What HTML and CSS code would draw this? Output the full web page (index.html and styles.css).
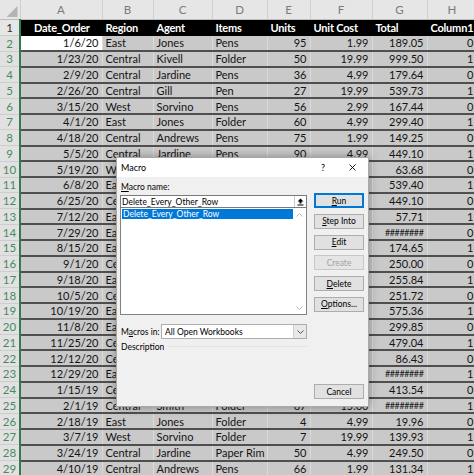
FILE: index.html
```html
<!DOCTYPE html>
<html>
  <head>
    <link rel="stylesheet" href="styles.css">
  </head>
  <body>
    <div class="sheet">
      <table class="grid">
        <colgroup>
          <col class="c-rn"><col class="c-a"><col class="c-b"><col class="c-c"><col class="c-d">
          <col class="c-e"><col class="c-f"><col class="c-g"><col class="c-h">
        </colgroup>
        <thead>
          <tr class="letters">
            <th class="corner"><span class="tri"></span></th>
            <th>A</th><th>B</th><th>C</th><th>D</th><th>E</th><th>F</th><th>G</th><th>H</th>
          </tr>
        </thead>
        <tbody>
          <tr class="head"><th class="rn">1</th><td class="first">Date_Order</td><td>Region</td><td>Agent</td><td>Items</td><td>Units</td><td>Unit Cost</td><td>Total</td><td>Column1</td></tr>
          <tr><th class="rn">2</th><td class="r active">1/6/20</td><td>East</td><td>Jones</td><td>Pens</td><td class="r">95</td><td class="r">1.99</td><td class="r">189.05</td><td class="r">0</td></tr>
          <tr><th class="rn">3</th><td class="r">1/23/20</td><td>Central</td><td>Kivell</td><td>Folder</td><td class="r">50</td><td class="r">19.99</td><td class="r">999.50</td><td class="r">1</td></tr>
          <tr><th class="rn">4</th><td class="r">2/9/20</td><td>Central</td><td>Jardine</td><td>Pens</td><td class="r">36</td><td class="r">4.99</td><td class="r">179.64</td><td class="r">0</td></tr>
          <tr><th class="rn">5</th><td class="r">2/26/20</td><td>Central</td><td>Gill</td><td>Pen</td><td class="r">27</td><td class="r">19.99</td><td class="r">539.73</td><td class="r">1</td></tr>
          <tr><th class="rn">6</th><td class="r">3/15/20</td><td>West</td><td>Sorvino</td><td>Pens</td><td class="r">56</td><td class="r">2.99</td><td class="r">167.44</td><td class="r">0</td></tr>
          <tr><th class="rn">7</th><td class="r">4/1/20</td><td>East</td><td>Jones</td><td>Folder</td><td class="r">60</td><td class="r">4.99</td><td class="r">299.40</td><td class="r">1</td></tr>
          <tr><th class="rn">8</th><td class="r">4/18/20</td><td>Central</td><td>Andrews</td><td>Pens</td><td class="r">75</td><td class="r">1.99</td><td class="r">149.25</td><td class="r">0</td></tr>
          <tr><th class="rn">9</th><td class="r">5/5/20</td><td>Central</td><td>Jardine</td><td>Pens</td><td class="r">90</td><td class="r">4.99</td><td class="r">449.10</td><td class="r">1</td></tr>
          <tr><th class="rn">10</th><td class="r">5/19/20</td><td>West</td><td></td><td></td><td></td><td></td><td class="r">63.68</td><td class="r">0</td></tr>
          <tr><th class="rn">11</th><td class="r">6/8/20</td><td>East</td><td></td><td></td><td></td><td></td><td class="r">539.40</td><td class="r">1</td></tr>
          <tr><th class="rn">12</th><td class="r">6/25/20</td><td>Central</td><td></td><td></td><td></td><td></td><td class="r">449.10</td><td class="r">0</td></tr>
          <tr><th class="rn">13</th><td class="r">7/12/20</td><td>East</td><td></td><td></td><td></td><td></td><td class="r">57.71</td><td class="r">1</td></tr>
          <tr><th class="rn">14</th><td class="r">7/29/20</td><td>East</td><td></td><td></td><td></td><td></td><td class="r hash">########</td><td class="r">0</td></tr>
          <tr><th class="rn">15</th><td class="r">8/15/20</td><td>East</td><td></td><td></td><td></td><td></td><td class="r">174.65</td><td class="r">1</td></tr>
          <tr><th class="rn">16</th><td class="r">9/1/20</td><td>Central</td><td></td><td></td><td></td><td></td><td class="r">250.00</td><td class="r">0</td></tr>
          <tr><th class="rn">17</th><td class="r">9/18/20</td><td>East</td><td></td><td></td><td></td><td></td><td class="r">255.84</td><td class="r">1</td></tr>
          <tr><th class="rn">18</th><td class="r">10/5/20</td><td>Central</td><td></td><td></td><td></td><td></td><td class="r">251.72</td><td class="r">0</td></tr>
          <tr><th class="rn">19</th><td class="r">10/19/20</td><td>East</td><td></td><td></td><td></td><td></td><td class="r">575.36</td><td class="r">1</td></tr>
          <tr><th class="rn">20</th><td class="r">11/8/20</td><td>East</td><td></td><td></td><td></td><td></td><td class="r">299.85</td><td class="r">0</td></tr>
          <tr><th class="rn">21</th><td class="r">11/25/20</td><td>Central</td><td></td><td></td><td></td><td></td><td class="r">479.04</td><td class="r">1</td></tr>
          <tr><th class="rn">22</th><td class="r">12/12/20</td><td>Central</td><td></td><td></td><td></td><td></td><td class="r">86.43</td><td class="r">0</td></tr>
          <tr><th class="rn">23</th><td class="r">12/29/20</td><td>East</td><td></td><td></td><td></td><td></td><td class="r hash">########</td><td class="r">1</td></tr>
          <tr><th class="rn">24</th><td class="r">1/15/19</td><td>Central</td><td></td><td></td><td></td><td></td><td class="r">413.54</td><td class="r">0</td></tr>
          <tr><th class="rn">25</th><td class="r">2/1/19</td><td>Central</td><td>Smith</td><td>Folder</td><td class="r">87</td><td class="r">15.00</td><td class="r hash">########</td><td class="r">1</td></tr>
          <tr><th class="rn">26</th><td class="r">2/18/19</td><td>East</td><td>Jones</td><td>Folder</td><td class="r">4</td><td class="r">4.99</td><td class="r">19.96</td><td class="r">0</td></tr>
          <tr><th class="rn">27</th><td class="r">3/7/19</td><td>West</td><td>Sorvino</td><td>Folder</td><td class="r">7</td><td class="r">19.99</td><td class="r">139.93</td><td class="r">1</td></tr>
          <tr><th class="rn">28</th><td class="r">3/24/19</td><td>Central</td><td>Jardine</td><td>Paper Rim</td><td class="r">50</td><td class="r">4.99</td><td class="r">249.50</td><td class="r">0</td></tr>
          <tr><th class="rn">29</th><td class="r">4/10/19</td><td>Central</td><td>Andrews</td><td>Pens</td><td class="r">66</td><td class="r">1.99</td><td class="r">131.34</td><td class="r">1</td></tr>
        </tbody>
      </table>

      <div class="dialog">
        <div class="titlebar">
          <span class="title">Macro</span>
          <span class="help">?</span>
          <svg class="close" width="7" height="7" viewBox="0 0 7 7">
            <path d="M0.5 0.5L6.5 6.5M6.5 0.5L0.5 6.5" stroke="#000" stroke-width="0.9" fill="none"/>
          </svg>
        </div>
        <div class="dlg-body">
          <div class="left">
            <div class="lbl"><u>M</u>acro name:</div>
            <div class="namebox">
              <span class="name-text">Delete_Every_Other_Row</span>
              <span class="up-btn">
                <svg width="7" height="8" viewBox="0 0 7 8">
                  <path d="M3.5 0.5L6.5 3.5H4.5V5.5H2.5V3.5H0.5Z" fill="#000"/>
                  <rect x="0.5" y="6.5" width="6" height="1" fill="#000"/>
                </svg>
              </span>
            </div>
            <div class="listbox">
              <div class="items">
                <div class="item selected">Delete_Every_Other_Row</div>
              </div>
              <div class="vscroll">
                <svg width="7" height="4" viewBox="0 0 7 4"><path d="M0.5 3.5L3.5 0.5L6.5 3.5" stroke="#b4b4b4" fill="none"/></svg>
                <svg width="7" height="4" viewBox="0 0 7 4"><path d="M0.5 0.5L3.5 3.5L6.5 0.5" stroke="#b4b4b4" fill="none"/></svg>
              </div>
            </div>
            <div class="macros-in">
              <span class="lbl-in">M<u>a</u>cros in:</span>
              <div class="combo">
                <span class="combo-text">All Open Workbooks</span>
                <span class="combo-arrow">
                  <svg width="7" height="4" viewBox="0 0 7 4"><path d="M0.5 0.5L3.5 3.5L6.5 0.5" stroke="#555" fill="none"/></svg>
                </span>
              </div>
            </div>
            <div class="desc">
              <span>Description</span>
              <span class="rule"></span>
            </div>
          </div>
          <div class="buttons">
            <button class="btn default"><u>R</u>un</button>
            <button class="btn"><u>S</u>tep Into</button>
            <button class="btn"><u>E</u>dit</button>
            <button class="btn disabled">Create</button>
            <button class="btn"><u>D</u>elete</button>
            <button class="btn"><u>O</u>ptions...</button>
            <button class="btn cancel">Cancel</button>
          </div>
        </div>
      </div>
    </div>
  </body>
</html>
```

FILE: styles.css
```css
body {
  margin: 0;
  background: #fff;
  font-family: Lato, "Liberation Sans", sans-serif;
  overflow: hidden;
}

.sheet {
  position: relative;
  width: 474px;
  height: 475px;
  overflow: hidden;
}

/* spreadsheet */

.grid {
  border-collapse: collapse;
  table-layout: fixed;
  width: 477px;
  font-size: 11px;
  color: #141414;
}

.c-rn { width: 20px; }
.c-a { width: 82px; }
.c-b { width: 51px; }
.c-c { width: 59px; }
.c-d { width: 55px; }
.c-e { width: 43px; }
.c-f { width: 62px; }
.c-g { width: 55px; }
.c-h { width: 50px; }

.grid td, .grid th {
  padding: 0 3px;
  white-space: nowrap;
  overflow: hidden;
  line-height: 13px;
}

.letters th {
  height: 17px;
  background: #e6e6e6;
  color: #7b7b7b;
  font-size: 11.5px;
  font-weight: normal;
  text-align: center;
  border-right: 1px solid #d0d0d0;
  border-bottom: 1px solid #bdbdbd;
}

.letters th.corner {
  padding: 0 2px 2px 0;
  vertical-align: bottom;
}

.tri {
  display: block;
  width: 11px;
  height: 11px;
  margin-left: auto;
  background: #b4b4b4;
  clip-path: polygon(100% 0, 100% 100%, 0 100%);
}

tbody tr {
  height: 15.75px;
}

th.rn {
  padding: 0;
  background: #e1e1e1;
  color: #4a8a63;
  font-size: 11.5px;
  font-weight: normal;
  text-align: center;
  border-bottom: 1px solid #cdcdcd;
  border-right: 2px solid #2f7d4f;
}

tbody td {
  background: #c9c9c9;
  border-bottom: 2px solid #4f4f4f;
  border-right: 1px solid #dadada;
}

.head td {
  background: #000;
  color: #fff;
  font-weight: bold;
  letter-spacing: -0.2px;
  border-bottom: 1px solid #000;
  border-right: 1px solid #000;
}

.head th.rn {
  background: #e6e6e6;
  color: #333;
}

.head td.first {
  padding-left: 13px;
}

td.r {
  text-align: right;
}

td.active {
  background: #fff;
}

td.hash {
  font-size: 9px;
  letter-spacing: -0.4px;
}

/* macro dialog */

.dialog {
  position: absolute;
  left: 116px;
  top: 157px;
  width: 253px;
  height: 250px;
  box-sizing: border-box;
  display: flex;
  flex-direction: column;
  background: #f0f0f0;
  border: 1px solid #a9a9a9;
  box-shadow: 0 0 9px rgba(0, 0, 0, 0.35);
  font-family: Lato, "Liberation Sans", sans-serif;
  font-size: 8.5px;
  color: #000;
  white-space: nowrap;
}

.titlebar {
  height: 19px;
  display: flex;
  align-items: center;
  padding-left: 4px;
  background: #fff;
}

.title {
  flex: 1;
  font-size: 9px;
}

.help {
  margin-right: 24px;
  font-size: 9px;
}

.close {
  margin-right: 12px;
}

.dlg-body {
  flex: 1;
  display: flex;
  gap: 7px;
  padding: 4px 4px 7px 3px;
}

.left {
  width: 187px;
  display: flex;
  flex-direction: column;
}

.lbl {
  height: 12px;
  line-height: 12px;
  padding-left: 1px;
}

.namebox {
  margin-top: 2px;
  height: 13px;
  box-sizing: border-box;
  display: flex;
  align-items: center;
  border: 1px solid #7a7a7a;
  background: #fff;
}

.name-text {
  flex: 1;
  padding-left: 1px;
  line-height: 10px;
}

.up-btn {
  width: 11px;
  height: 11px;
  display: flex;
  align-items: center;
  justify-content: center;
  border-left: 1px solid #c8c8c8;
}

.listbox {
  height: 107px;
  box-sizing: border-box;
  display: flex;
  border: 1px solid #828282;
  border-top: none;
  background: #fff;
}

.items {
  flex: 1;
  padding: 1px 0 0 1px;
}

.item {
  height: 10px;
  line-height: 10px;
  padding-left: 1px;
}

.item.selected {
  background: #0078d7;
  color: #fff;
}

.vscroll {
  width: 13px;
  display: flex;
  flex-direction: column;
  justify-content: space-between;
  align-items: center;
  padding: 5px 0 4px;
}

.macros-in {
  margin-top: 9px;
  display: flex;
  align-items: center;
}

.lbl-in {
  width: 41px;
  padding-left: 1px;
  box-sizing: border-box;
}

.combo {
  width: 146px;
  height: 15px;
  box-sizing: border-box;
  display: flex;
  align-items: center;
  border: 1px solid #adadad;
  background: #fff;
}

.combo-text {
  flex: 1;
  padding-left: 3px;
}

.combo-arrow {
  width: 12px;
  height: 13px;
  display: flex;
  align-items: center;
  justify-content: center;
  border-left: 1px solid #cfcfcf;
  background: #e8e8e8;
}

.desc {
  margin-top: 1px;
  height: 13px;
  display: flex;
  align-items: center;
  padding-left: 1px;
}

.rule {
  flex: 1;
  height: 1px;
  margin-left: 4px;
  background: #e2e2e2;
}

.buttons {
  width: 50px;
  display: flex;
  flex-direction: column;
  gap: 5.8px;
  padding-top: 12px;
}

.btn {
  height: 15px;
  box-sizing: border-box;
  padding: 0;
  border: 1px solid #adadad;
  background: #e1e1e1;
  color: #000;
  font-family: inherit;
  font-size: 8.5px;
  line-height: 12px;
  text-align: center;
}

.btn.default {
  border: 2px solid #0078d7;
}

.btn.disabled {
  color: #a3a3a3;
  border-color: #c8c8c8;
  background: #e5e5e5;
}

.btn.cancel {
  margin-top: auto;
}
```
